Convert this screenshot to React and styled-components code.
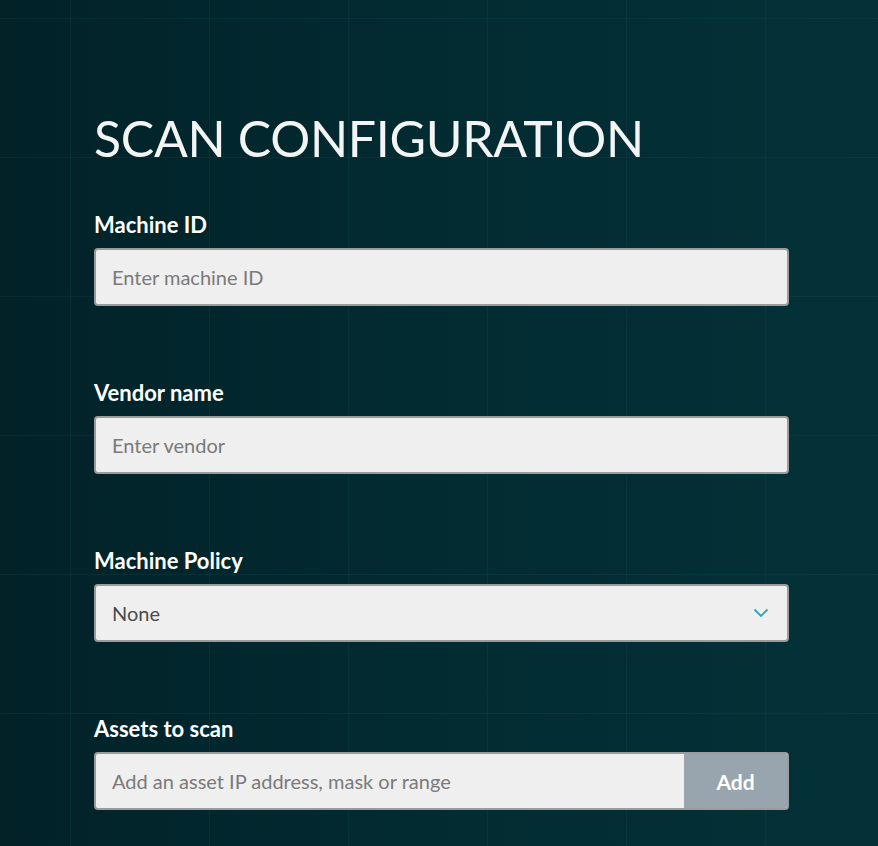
import React from 'react'
import styled, { createGlobalStyle } from 'styled-components'

const Global = createGlobalStyle`
  html, body {
    margin: 0;
    padding: 0;
  }
  body {
    font-family: Lato, "Open Sans", sans-serif;
    background: #022a31;
  }
`;

function App() {
    return (
        <Page>
            <Global />
            <Form>
                <Title>SCAN CONFIGURATION</Title>
                <Field>
                    <Label>Machine ID</Label>
                    <Box>
                        <Input placeholder='Enter machine ID' />
                    </Box>
                </Field>
                <Field>
                    <Label>Vendor name</Label>
                    <Box>
                        <Input placeholder='Enter vendor' />
                    </Box>
                </Field>
                <Field>
                    <Label>Machine Policy</Label>
                    <Box>
                        <Select>None</Select>
                        <Chevron width='16' height='10' viewBox='0 0 16 10'>
                            <path d='M1.5 1.5 L8 8 L14.5 1.5' fill='none' stroke='#2ba6bf' strokeWidth='1.8' />
                        </Chevron>
                    </Box>
                </Field>
                <Field>
                    <Label>Assets to scan</Label>
                    <Box>
                        <Input placeholder='Add an asset IP address, mask or range' />
                        <AddButton>Add</AddButton>
                    </Box>
                </Field>
            </Form>
        </Page>
    )
}

const Page = styled.div`
  min-height: 846px;
  box-sizing: border-box;
  padding: 108px 0 0 94px;
  background-color: #022a31;
  background-image:
    linear-gradient(rgba(30, 110, 115, 0.14) 1px, transparent 1px),
    linear-gradient(90deg, rgba(30, 110, 115, 0.14) 1px, transparent 1px),
    linear-gradient(90deg, rgba(1, 28, 33, 0.6) 0%, rgba(1, 30, 36, 0) 45%, rgba(10, 70, 75, 0.25) 100%);
  background-size: 139px 139px, 139px 139px, 100% 100%;
  background-position: 0 18px, 70px 0, 0 0;
`;
const Form = styled.div`
  width: 695px;
  display: flex;
  flex-direction: column;
`;
const Title = styled.h1`
  margin: 0 0 44px 0;
  font-size: 50px;
  line-height: 60px;
  font-weight: 400;
  letter-spacing: -0.3px;
  color: #f3f4f4;
`;
const Field = styled.div`
  display: flex;
  flex-direction: column;
  margin-bottom: 74px;
`;
const Label = styled.div`
  font-size: 22px;
  line-height: 26px;
  font-weight: 700;
  color: #ffffff;
  margin-bottom: 10px;
`;
const Box = styled.div`
  position: relative;
  display: flex;
  height: 58px;
  box-sizing: border-box;
  border: 2px solid #9b9b9b;
  border-radius: 4px;
  background: #efefef;
  overflow: hidden;
`;
const Input = styled.input`
  flex: 1;
  border: none;
  outline: none;
  background: transparent;
  padding: 0 16px;
  font-family: Lato, "Open Sans", sans-serif;
  font-size: 20px;
  color: #444;
  &::placeholder {
    color: #7a7a7a;
  }
`;
const Select = styled.div`
  flex: 1;
  display: flex;
  align-items: center;
  padding: 0 16px;
  font-size: 20px;
  color: #4a4a4a;
`;
const Chevron = styled.svg`
  position: absolute;
  right: 18px;
  top: 22px;
`;
const AddButton = styled.button`
  width: 103px;
  border: none;
  background: #98a5af;
  color: #ffffff;
  font-family: Lato, "Open Sans", sans-serif;
  font-size: 21px;
  font-weight: 700;
  cursor: pointer;
`;

export default App
